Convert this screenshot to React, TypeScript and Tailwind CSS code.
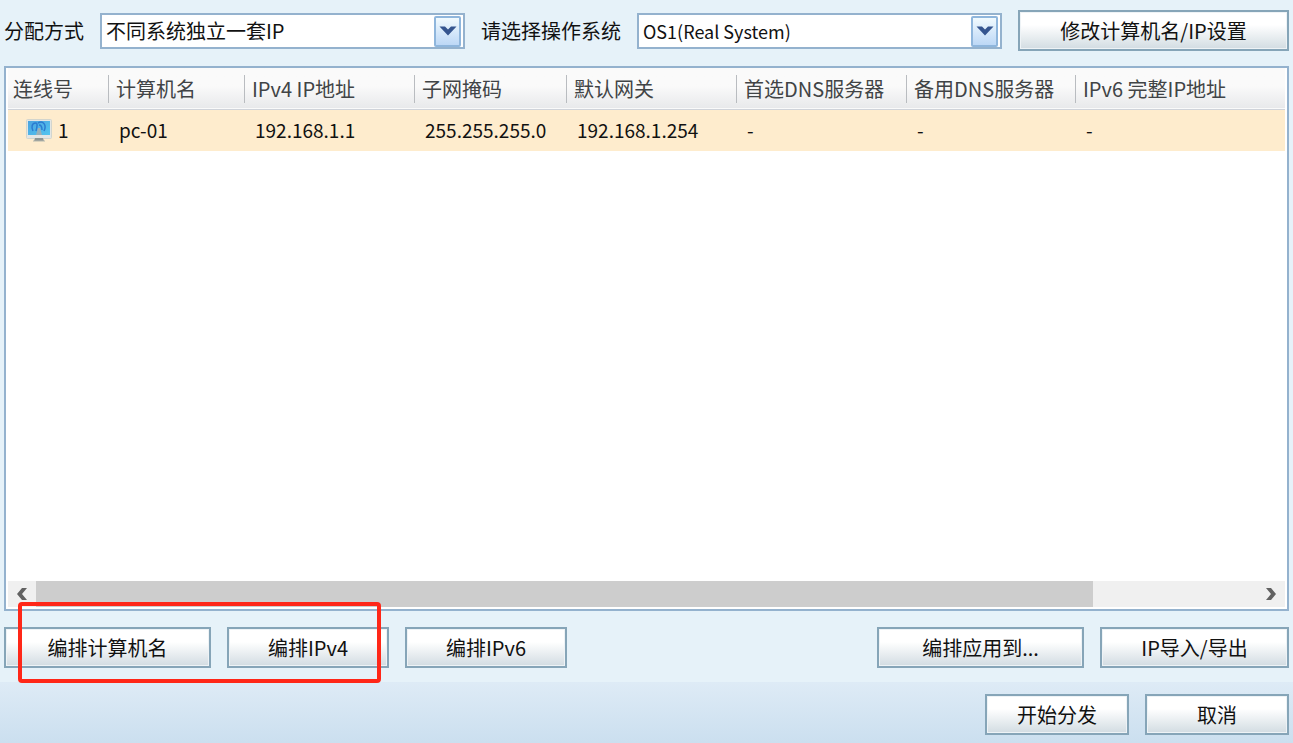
import * as React from "react";
import clsx from "clsx";

const COLUMNS = [
  { label: "连线号", width: "w-[100px]" },
  { label: "计算机名", width: "w-[136px]" },
  { label: "IPv4 IP地址", width: "w-[170px]" },
  { label: "子网掩码", width: "w-[152px]" },
  { label: "默认网关", width: "w-[170px]" },
  { label: "首选DNS服务器", width: "w-[170px]" },
  { label: "备用DNS服务器", width: "w-[169px]" },
  { label: "IPv6 完整IP地址", width: "" },
];

const ROWS = [["1", "pc-01", "192.168.1.1", "255.255.255.0", "192.168.1.254", "-", "-", "-"]];

function Button({ className, children }: { className?: string; children: React.ReactNode }) {
  return (
    <button
      type="button"
      className={clsx(
        "h-[41px] shrink-0 border-2 border-[#86a5b8] bg-linear-to-b from-white from-35% to-[#d2dce2] text-center whitespace-nowrap shadow-[inset_0_0_0_1px_#eef3f6]",
        className,
      )}
    >
      {children}
    </button>
  );
}

function Select({ id, options, className }: { id: string; options: string[]; className?: string }) {
  return (
    <div className="relative h-9 min-w-0 flex-1">
      <select
        id={id}
        className={clsx("h-full w-full appearance-none border-2 border-[#94b2ce] bg-white pr-9 pl-1 leading-8", className)}
      >
        {options.map((option) => (
          <option key={option}>{option}</option>
        ))}
      </select>
      <span className="pointer-events-none absolute top-[3px] right-1 flex h-[31px] w-[27px] items-center justify-center rounded-xs border-2 border-[#8fb6dc] bg-linear-to-b from-[#f1fafe] to-[#bdd8f6]">
        <svg viewBox="0 0 18 10" className="h-[10px] w-[18px]" aria-hidden="true">
          <path d="M0.5 0.5H6L9 3.5L12 0.5H17.5L9 9.5Z" fill="#35558f" />
        </svg>
      </span>
    </div>
  );
}

function ComputerIcon() {
  return (
    <svg viewBox="0 0 26 23" className="h-[23px] w-[26px] shrink-0" aria-hidden="true">
      <defs>
        <linearGradient id="screen" x1="0" y1="0" x2="1" y2="1">
          <stop offset="0" stopColor="#4aa3e0" />
          <stop offset="1" stopColor="#52c5ef" />
        </linearGradient>
      </defs>
      <rect x="0.5" y="0.5" width="25" height="19" rx="1" fill="#e3e6e4" stroke="#d3d5cd" />
      <rect x="2" y="2" width="22" height="14" fill="url(#screen)" />
      <path d="M7 12C5 8 6 4 9.500 4C12 4 11 8 10 12M12 4C17 1 21 6 18 12M13 6C16 6 16 9 16 11" fill="none" stroke="#2b7bd0" strokeWidth="1.500" />
      <path d="M10 16L12 9H14L16 16Z" fill="#9ab0b8" />
      <path d="M9 19H17L18 22H8Z" fill="#8d9694" />
      <path d="M7 22H19" stroke="#b4b7ae" strokeWidth="1" />
    </svg>
  );
}

function ScrollArrow({ label, flip }: { label: string; flip?: boolean }) {
  return (
    <button type="button" aria-label={label} className="flex w-7 shrink-0 items-center justify-center">
      <svg viewBox="0 0 10 12" className={clsx("h-3 w-[10px]", flip && "rotate-180")} aria-hidden="true">
        <path d="M5 0H10L5 6L10 12H5L0 6Z" fill="#626262" />
      </svg>
    </button>
  );
}

export default function App() {
  return (
    <div className="flex min-h-screen flex-col bg-[#e6f2f9] font-['Noto_Sans_CJK_SC',sans-serif] text-[20px] leading-7 text-[#111111]">
      <header className="flex items-center gap-4 px-1 pt-[10px]">
        <label htmlFor="mode" className="shrink-0">分配方式</label>
        <Select id="mode" options={["不同系统独立一套IP"]} />
        <label htmlFor="system" className="shrink-0">请选择操作系统</label>
        <Select id="system" options={["OS1(Real System)"]} className="text-[18px]" />
        <Button className="w-[271px]">修改计算机名/IP设置</Button>
      </header>

      <main className="mx-1 mt-[15px] flex flex-1 flex-col border-2 border-[#94b2ce] bg-white px-0.5 pb-0.5">
        <table className="w-full table-fixed border-collapse text-left">
          <thead>
            <tr className="h-[41px] border-b border-[#cfd3da] bg-linear-to-b from-[#fafafa] from-45% to-[#e8e9eb] text-[#414446]">
              {COLUMNS.map((column, i) => (
                <th key={column.label} scope="col" className={clsx("p-0 pt-0.5 font-normal whitespace-nowrap", column.width)}>
                  <span className={clsx("block", i === 0 ? "pl-[5px]" : "border-l border-[#b9bcc0] pl-[7px]")}>{column.label}</span>
                </th>
              ))}
            </tr>
          </thead>
          <tbody>
            {ROWS.map(([line, ...cells]) => (
              <tr key={line} className="h-[42px] bg-[#feeccd] text-[19px] whitespace-nowrap">
                <td className="p-0 pl-[18px]">
                  <span className="flex items-center gap-1.5">
                    <ComputerIcon />
                    {line}
                  </span>
                </td>
                {cells.map((cell, i) => (
                  <td key={i} className="p-0 pl-[11px]">{cell}</td>
                ))}
              </tr>
            ))}
          </tbody>
        </table>

        <div className="mt-auto flex h-[26px] bg-[#f0f0f0]">
          <ScrollArrow label="向左滚动" />
          <div className="flex-1">
            <div className="h-full w-[86.6%] bg-[#cdcdcd]" />
          </div>
          <ScrollArrow label="向右滚动" flip />
        </div>
      </main>

      <div className="flex justify-between px-1 pt-4 pb-[14px]">
        <div className="relative flex gap-4">
          <Button className="w-[207px]">编排计算机名</Button>
          <Button className="w-[162px]">编排IPv4</Button>
          <Button className="w-[162px]">编排IPv6</Button>
          <span className="pointer-events-none absolute -top-[25px] left-[14px] h-[81px] w-[363px] rounded-sm border-4 border-[#ff2718]" />
        </div>
        <div className="flex gap-4">
          <Button className="w-[207px]">编排应用到...</Button>
          <Button className="w-[189px]">IP导入/导出</Button>
        </div>
      </div>

      <footer className="flex justify-end gap-4 bg-linear-to-b from-[#deebf6] to-[#cbdfef] px-1 pt-3 pb-2">
        <Button className="w-[144px]">开始分发</Button>
        <Button className="w-[144px]">取消</Button>
      </footer>
    </div>
  );
}
